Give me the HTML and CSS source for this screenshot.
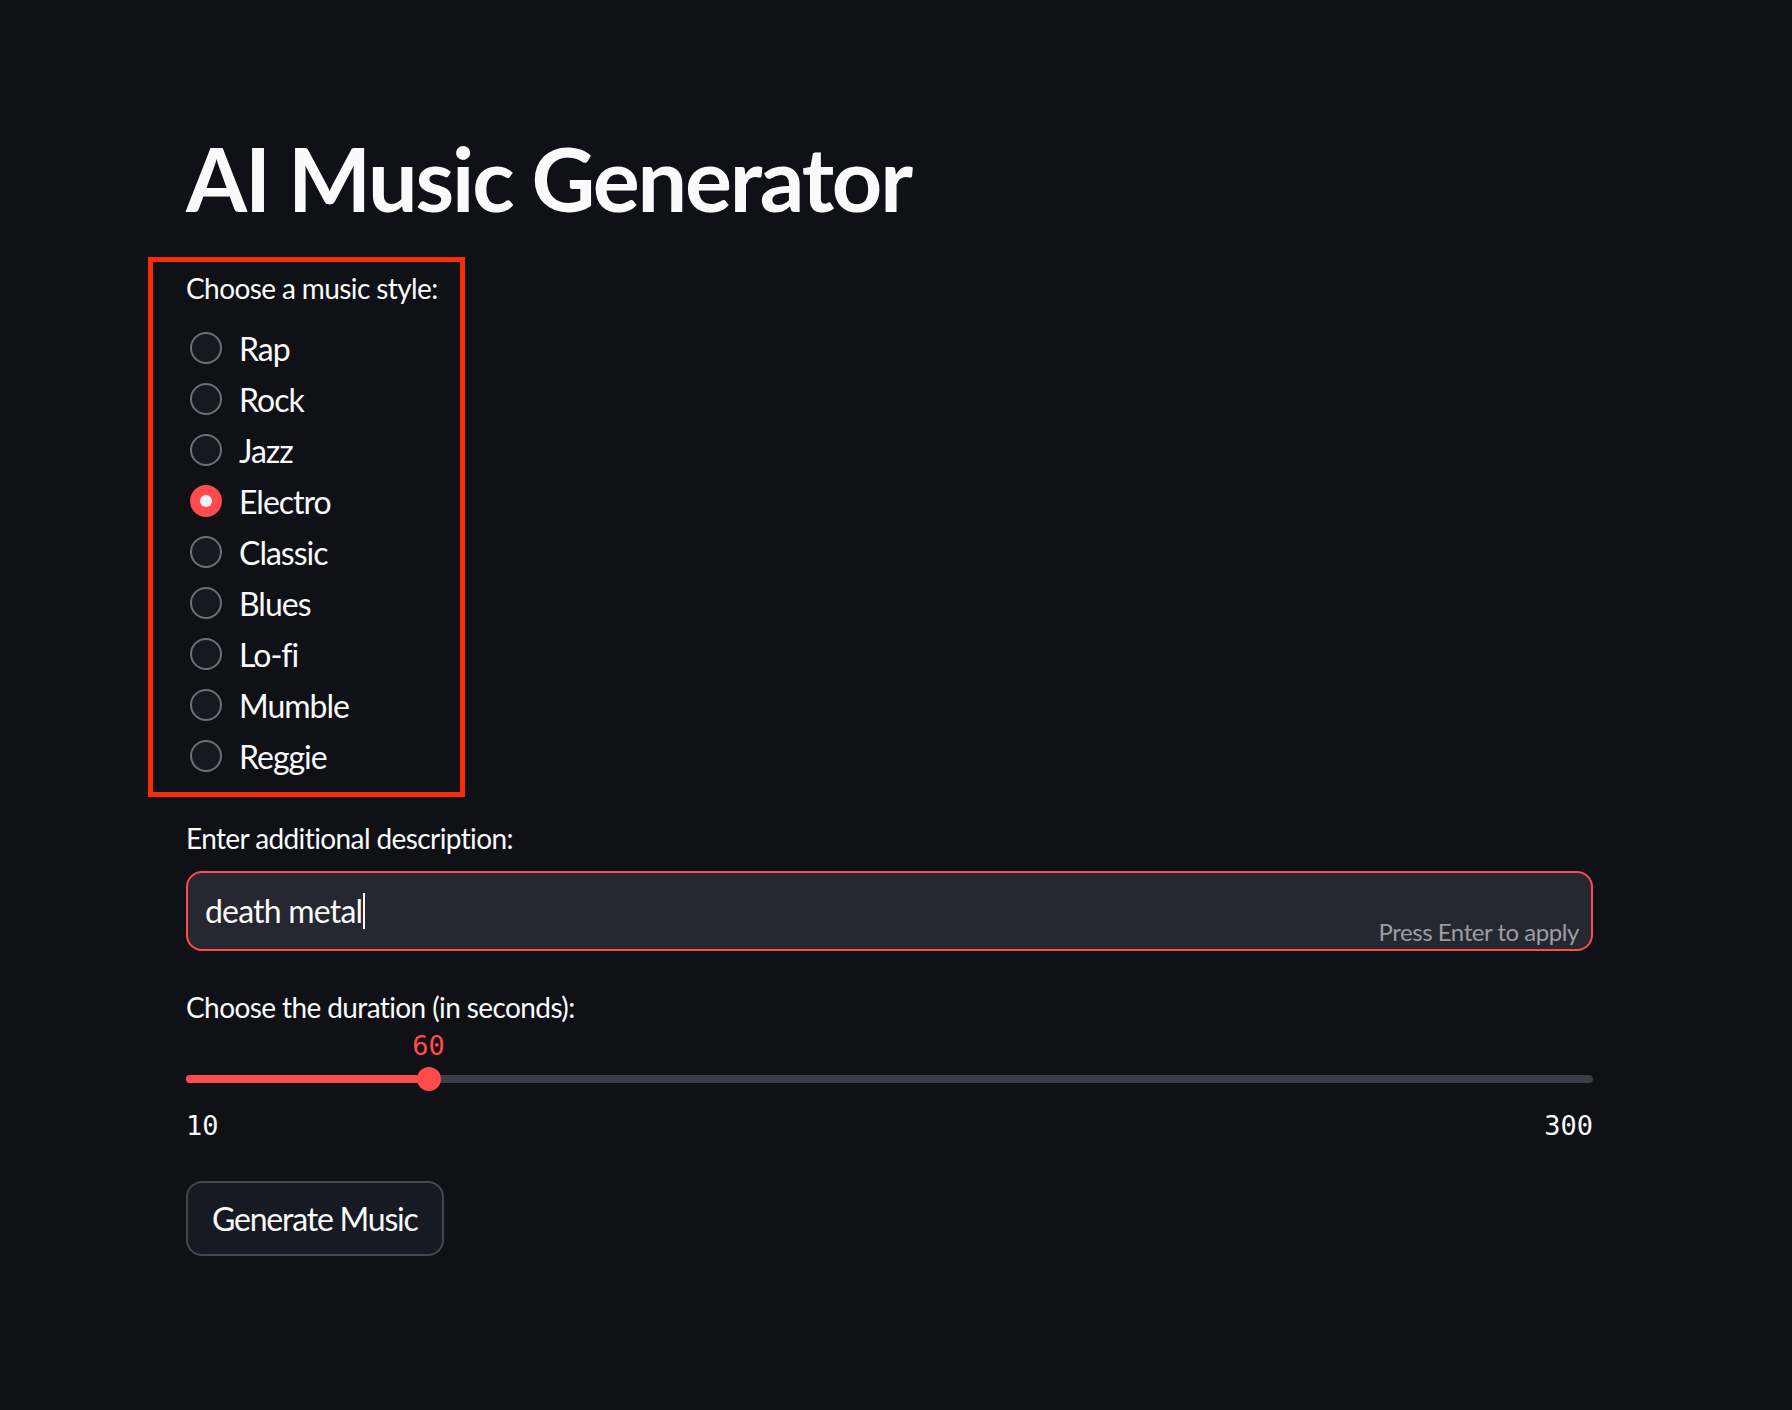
FILE: index.html
```html
<!DOCTYPE html>
<html lang="en">
<head>
<meta charset="utf-8">
<title>AI Music Generator</title>
<link rel="stylesheet" href="styles.css">
</head>
<body>
<main class="main">
  <h1 class="title">AI Music Generator</h1>

  <section class="radio-widget">
    <div class="widget-label">Choose a music style:</div>
    <div class="radio-list">
      <label class="radio-row"><span class="radio"></span><span class="radio-text">Rap</span></label>
      <label class="radio-row"><span class="radio"></span><span class="radio-text">Rock</span></label>
      <label class="radio-row"><span class="radio"></span><span class="radio-text">Jazz</span></label>
      <label class="radio-row"><span class="radio radio-checked"></span><span class="radio-text">Electro</span></label>
      <label class="radio-row"><span class="radio"></span><span class="radio-text">Classic</span></label>
      <label class="radio-row"><span class="radio"></span><span class="radio-text">Blues</span></label>
      <label class="radio-row"><span class="radio"></span><span class="radio-text">Lo-fi</span></label>
      <label class="radio-row"><span class="radio"></span><span class="radio-text">Mumble</span></label>
      <label class="radio-row"><span class="radio"></span><span class="radio-text">Reggie</span></label>
    </div>
  </section>

  <section class="text-widget">
    <div class="widget-label">Enter additional description:</div>
    <div class="text-input">
      <span class="input-value">death metal<span class="caret"></span></span>
      <span class="input-hint">Press Enter to apply</span>
    </div>
  </section>

  <section class="slider-widget">
    <div class="widget-label">Choose the duration (in seconds):</div>
    <div class="slider">
      <div class="slider-value" style="left: 17.24%">60</div>
      <div class="track">
        <div class="track-fill" style="width: 17.24%"></div>
        <div class="thumb" style="left: 17.24%"></div>
      </div>
      <div class="slider-range"><span>10</span><span>300</span></div>
    </div>
  </section>

  <button class="btn">Generate Music</button>
</main>
</body>
</html>
```

FILE: styles.css
```css
* { box-sizing: border-box; }

html, body {
  margin: 0;
  padding: 0;
  background: #0f1117;
  color: #fafafa;
  font-family: Lato, "Noto Sans", sans-serif;
}

body { min-height: 1410px; }

.main {
  width: 1407px;
  margin-left: 186px;
  padding-top: 126px;
}

.title {
  margin: 0;
  font-size: 88px;
  font-weight: 700;
  line-height: 1.2;
  letter-spacing: -2.2px;
}

.widget-label {
  font-size: 28px;
  line-height: 36px;
  letter-spacing: -0.6px;
}

/* radio group with red annotation frame */
.radio-widget {
  margin-top: 25px;
  margin-left: -38px;
  width: 317px;
  border: 5px solid #fa2b08;
  padding: 8px 0 10px 33px;
}

.radio-list {
  margin-top: 17px;
  display: flex;
  flex-direction: column;
}

.radio-row {
  height: 51px;
  display: flex;
  align-items: center;
  gap: 17px;
  padding-left: 4px;
}

.radio {
  width: 32px;
  height: 32px;
  border-radius: 50%;
  border: 2px solid #6e7076;
  background: #151922;
  flex: none;
  display: flex;
  align-items: center;
  justify-content: center;
}

.radio-checked {
  border-color: #ff4b4b;
  background: #ff4b4b;
}

.radio-checked::after {
  content: "";
  width: 12px;
  height: 12px;
  border-radius: 50%;
  background: #f0f2f6;
}

.radio-text {
  font-size: 32px;
  letter-spacing: -1px;
}

/* text input */
.text-widget { margin-top: 23px; }

.text-input {
  margin-top: 15px;
  height: 80px;
  border: 2px solid #ff4b4b;
  border-radius: 16px;
  background: #262730;
  display: flex;
  justify-content: space-between;
  align-items: center;
  padding: 0 12px 0 17px;
}

.input-value {
  font-size: 32px;
  letter-spacing: -0.8px;
  display: flex;
  align-items: center;
}

.caret {
  display: inline-block;
  width: 2px;
  height: 36px;
  background: #fafafa;
  margin-left: 1px;
}

.input-hint {
  align-self: flex-end;
  font-size: 24px;
  line-height: 24px;
  letter-spacing: -0.45px;
  color: #9c9da3;
  margin-bottom: 5px;
}

/* slider */
.slider-widget { margin-top: 38px; }

.slider {
  position: relative;
  padding-top: 50px;
}

.slider-value {
  position: absolute;
  top: 6px;
  transform: translateX(-50%);
  font-family: "DejaVu Sans Mono", "Liberation Mono", monospace;
  font-size: 27px;
  line-height: 30px;
  color: #ff4b4b;
}

.track {
  position: relative;
  height: 8px;
  border-radius: 4px;
  background: #3a3d47;
}

.track-fill {
  height: 100%;
  border-radius: 4px;
  background: #ff4b4b;
}

.thumb {
  position: absolute;
  top: 50%;
  width: 24px;
  height: 24px;
  border-radius: 50%;
  background: #ff4b4b;
  transform: translate(-50%, -50%);
}

.slider-range {
  margin-top: 28px;
  display: flex;
  justify-content: space-between;
  font-family: "DejaVu Sans Mono", "Liberation Mono", monospace;
  font-size: 27px;
  line-height: 30px;
}

/* button */
.btn {
  margin-top: 40px;
  height: 75px;
  padding: 0 24px;
  border: 2px solid #45474e;
  border-radius: 16px;
  background: #171a22;
  color: #fafafa;
  font-family: Lato, "Noto Sans", sans-serif;
  font-size: 32px;
  letter-spacing: -1.2px;
}
```
